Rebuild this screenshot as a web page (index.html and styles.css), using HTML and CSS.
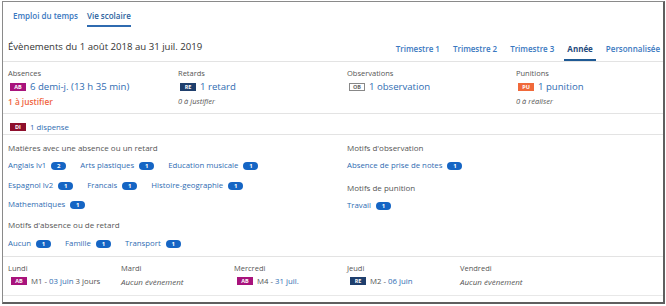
FILE: index.html
```html
<!DOCTYPE html>
<html lang="fr">
<head>
  <meta charset="UTF-8">
  <title>Vie scolaire</title>
  <link rel="stylesheet" href="styles.css">
</head>
<body>
  <div class="frame">
    <!-- Onglets -->
    <nav class="tabs">
      <a class="tab">Emploi du temps</a>
      <a class="tab active">Vie scolaire</a>
    </nav>

    <div class="head">
      <h1>Évènements du 1 août 2018 au 31 juil. 2019</h1>
      <nav class="periods">
        <a class="period">Trimestre 1</a>
        <a class="period">Trimestre 2</a>
        <a class="period">Trimestre 3</a>
        <a class="period active">Année</a>
        <a class="period">Personnalisée</a>
      </nav>
    </div>

    <!-- Synthèse -->
    <div class="summary">
      <div class="stat">
        <div class="label">Absences</div>
        <div class="value"><span class="code ab">AB</span>6 demi-j. (13 h 35 min)</div>
        <div class="note alert">1 à justifier</div>
      </div>
      <div class="stat">
        <div class="label">Retards</div>
        <div class="value"><span class="code re">RE</span>1 retard</div>
        <div class="note">0 à justifier</div>
      </div>
      <div class="stat">
        <div class="label">Observations</div>
        <div class="value"><span class="code ob">OB</span>1 observation</div>
      </div>
      <div class="stat">
        <div class="label">Punitions</div>
        <div class="value"><span class="code pu">PU</span>1 punition</div>
        <div class="note">0 à réaliser</div>
      </div>
    </div>

    <div class="dispense">
      <span class="code di">DI</span><a class="link">1 dispense</a>
    </div>

    <!-- Motifs -->
    <div class="motifs">
      <div class="motif-col left">
        <div class="group-title">Matières avec une absence ou un retard</div>
        <div class="chips">
          <a class="chip">Anglais lv1 <span class="count">2</span></a>
          <a class="chip">Arts plastiques <span class="count">1</span></a>
          <a class="chip">Education musicale <span class="count">1</span></a>
        </div>
        <div class="chips">
          <a class="chip">Espagnol lv2 <span class="count">1</span></a>
          <a class="chip">Francais <span class="count">1</span></a>
          <a class="chip">Histoire-geographie <span class="count">1</span></a>
        </div>
        <div class="chips">
          <a class="chip">Mathematiques <span class="count">1</span></a>
        </div>
        <div class="group-title second">Motifs d'absence ou de retard</div>
        <div class="chips">
          <a class="chip">Aucun <span class="count">1</span></a>
          <a class="chip">Famille <span class="count">1</span></a>
          <a class="chip">Transport <span class="count">1</span></a>
        </div>
      </div>
      <div class="motif-col">
        <div class="group-title">Motifs d'observation</div>
        <div class="chips">
          <a class="chip">Absence de prise de notes <span class="count">1</span></a>
        </div>
        <div class="group-title third">Motifs de punition</div>
        <div class="chips">
          <a class="chip">Travail <span class="count">1</span></a>
        </div>
      </div>
    </div>

    <!-- Semaine -->
    <div class="week">
      <div class="day">
        <div class="label">Lundi</div>
        <div class="event"><span class="code ab">AB</span>M1 - <a class="link">03 juin</a> 3 jours</div>
      </div>
      <div class="day">
        <div class="label">Mardi</div>
        <div class="empty">Aucun évènement</div>
      </div>
      <div class="day">
        <div class="label">Mercredi</div>
        <div class="event"><span class="code ab">AB</span>M4 - <a class="link">31 juil.</a></div>
      </div>
      <div class="day">
        <div class="label">Jeudi</div>
        <div class="event"><span class="code re">RE</span>M2 - <a class="link">06 juin</a></div>
      </div>
      <div class="day">
        <div class="label">Vendredi</div>
        <div class="empty">Aucun évènement</div>
      </div>
    </div>
  </div>
</body>
</html>
```

FILE: styles.css
```css
body {
  margin: 0;
  font-family: "Open Sans", "DejaVu Sans", sans-serif;
  color: #444;
  background: #fff;
}
a {
  cursor: pointer;
}
.frame {
  margin: 1px 0 0 2px;
  width: 660px;
  height: 300px;
  border: 1px solid #8a8a8a;
  border-right: 2px solid #5f5f5f;
  border-bottom: 2px solid #5f5f5f;
  overflow: hidden;
}

/* onglets */
.tabs {
  display: flex;
  gap: 9px;
  padding-left: 10px;
}
.tab {
  font-size: 8px;
  font-weight: 600;
  color: #3a78c0;
  line-height: 12px;
  padding: 8px 0 3px;
  border-bottom: 2px solid transparent;
}
.tab.active {
  color: #2a5f9e;
  border-bottom-color: #2f6bb0;
}

.head {
  display: flex;
  justify-content: space-between;
  align-items: flex-start;
  padding: 12px 0 0 5px;
  border-bottom: 1px solid #e3e3e3;
}
.head h1 {
  margin: 0;
  font-size: 9.6px;
  font-weight: 400;
  line-height: 16px;
  color: #333;
}
.periods {
  display: flex;
  gap: 7px;
  margin-top: 4px;
}
.period {
  font-size: 8px;
  font-weight: 600;
  color: #3a78c0;
  line-height: 12px;
  padding: 0 3px 4px;
  border-bottom: 2px solid transparent;
}
.period.active {
  color: #1f4a7c;
  font-weight: 700;
  border-bottom-color: #1f5a94;
}

/* codes */
.code {
  display: inline-block;
  width: 16px;
  height: 8px;
  line-height: 8px;
  margin-right: 4px;
  font-size: 5.5px;
  font-weight: 700;
  text-align: center;
  color: #fff;
  vertical-align: 1px;
}
.code.ab { background: #a8137c; }
.code.re { background: #1f3f6d; }
.code.di { background: #8e0f2c; }
.code.pu { background: #f0693a; }
.code.ob {
  width: 14px;
  height: 6px;
  line-height: 6px;
  color: #666;
  border: 1px solid #888;
  background: #fff;
}

/* synthèse */
.summary {
  display: grid;
  grid-template-columns: 170px 169px 169px 1fr;
  padding: 6px 0 7px 5px;
  border-bottom: 1px solid #e3e3e3;
  height: 38px;
}
.label {
  font-size: 7.5px;
  line-height: 11px;
  color: #555;
}
.value {
  font-size: 9.6px;
  line-height: 15px;
  color: #2f6cb2;
  padding-left: 2px;
}
.note {
  margin-top: 2px;
  font-size: 7.5px;
  line-height: 11px;
  font-style: italic;
  color: #555;
}
.note.alert {
  font-style: normal;
  font-weight: 600;
  font-size: 8.3px;
  color: #f0643e;
}

.dispense {
  padding: 7px 0 0 7px;
  height: 13px;
  border-bottom: 1px solid #e3e3e3;
  font-size: 7.8px;
  line-height: 13px;
}
.link {
  color: #2f6cb2;
}

/* motifs */
.motifs {
  display: flex;
  height: 114px;
  padding: 7px 0 0 5px;
  border-bottom: 1px solid #e3e3e3;
}
.motif-col.left {
  width: 339px;
}
.group-title {
  font-size: 8px;
  line-height: 12px;
  color: #555;
  margin-bottom: 4px;
}
.group-title.second {
  margin-top: 8px;
  margin-bottom: 5px;
}
.group-title.third {
  margin-top: 10px;
}
.chips {
  display: flex;
  gap: 14px;
  height: 14px;
  margin-bottom: 5.5px;
}
.chip {
  font-size: 7.8px;
  line-height: 14px;
  color: #2f6cb2;
  white-space: nowrap;
}
.count {
  display: inline-block;
  width: 15px;
  height: 8px;
  line-height: 8px;
  margin-left: 3px;
  border-radius: 4px;
  background: #1565c4;
  color: #fff;
  font-size: 6px;
  font-weight: 700;
  text-align: center;
  vertical-align: 0;
}

/* semaine */
.week {
  display: grid;
  grid-template-columns: repeat(5, 113px);
  padding: 6px 0 0 5px;
  height: 32px;
  border-bottom: 1px solid #e8e8e8;
}
.day .label {
  line-height: 11px;
}
.event,
.empty {
  margin-top: 1px;
  font-size: 7.8px;
  line-height: 13px;
  color: #555;
  padding-left: 3px;
  white-space: nowrap;
}
.empty {
  font-style: italic;
  font-size: 8px;
  padding-left: 0;
}
```
